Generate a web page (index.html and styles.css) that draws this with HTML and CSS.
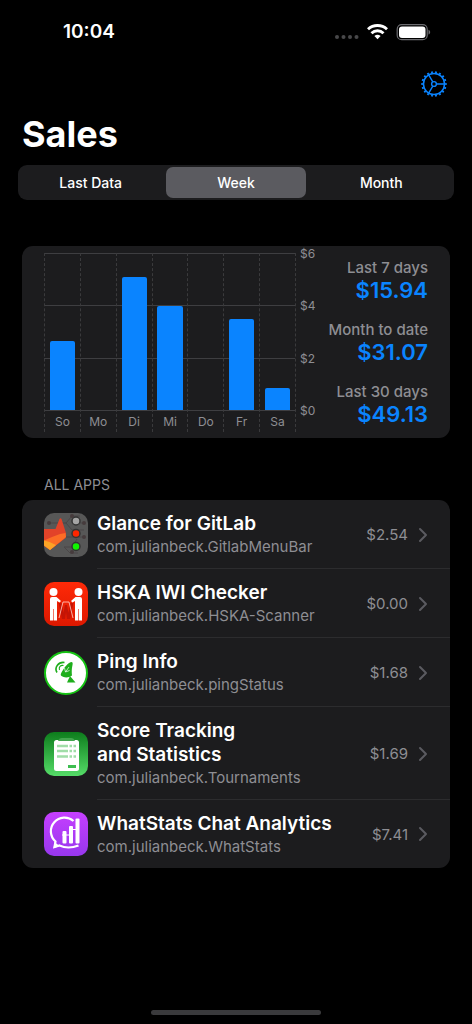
FILE: index.html
```html
<!DOCTYPE html>
<html lang="en">
<head>
<meta charset="utf-8">
<meta name="viewport" content="width=device-width, initial-scale=1">
<title>Sales</title>
<link rel="stylesheet" href="styles.css">
</head>
<body>
<div class="screen">
  <header class="status-bar">
    <time class="clock">10:04</time>
    <svg class="status-icons" width="98" height="20" viewBox="0 0 98 20" aria-hidden="true">
      <g fill="#48484a"><circle cx="3" cy="15" r="2"/><circle cx="9.500" cy="15" r="2"/><circle cx="16" cy="15" r="2"/><circle cx="22.500" cy="15" r="2"/></g>
      <g fill="none" stroke="#fff" stroke-width="2.900"><path d="M34 7.200a14 14 0 0 1 19 0"/><path d="M37.500 11.200a8.700 8.700 0 0 1 12 0"/></g>
      <path d="M40.400 14.100a4.600 4.600 0 0 1 6.200 0L43.500 17.300z" fill="#fff"/>
      <rect x="63.200" y="2.700" width="30" height="15" rx="4.500" fill="none" stroke="#6c6c70" stroke-width="1.200"/>
      <rect x="65" y="4.500" width="26.500" height="11.500" rx="3" fill="#fff"/>
      <path d="M94.500 7.700c2.200.8 2.200 4 0 4.800z" fill="#6c6c70"/>
    </svg>
  </header>

  <nav class="toolbar">
    <button class="settings" type="button" aria-label="Settings">
      <svg width="28" height="28" viewBox="0 0 28 28" fill="none" stroke="#0a84ff">
        <circle cx="14" cy="14" r="10.500" stroke-width="1.500"/>
        <circle cx="14" cy="14" r="11.800" stroke-width="1.900" pathLength="180" stroke-dasharray="4.500 5.500" stroke-dashoffset="2.250"/>
        <circle cx="14" cy="14" r="2.400" stroke-width="1.400"/>
        <path d="M16.400 14h8.100M12.800 11.900 8.700 4.900M12.800 16.100l-4.100 7" stroke-width="1.400"/>
      </svg>
    </button>
  </nav>

  <main>
    <h1 class="title">Sales</h1>

    <fieldset class="segments" aria-label="Period">
      <label class="segment"><input type="radio" name="period"><span>Last Data</span></label>
      <label class="segment"><input type="radio" name="period" checked><span>Week</span></label>
      <label class="segment"><input type="radio" name="period"><span>Month</span></label>
    </fieldset>

    <section class="card overview" aria-label="Sales this week">
      <div class="chart">
        <div class="grid-lines"><i></i><i></i><i></i></div>
        <div class="days">
          <div class="day"><div class="track"><div class="bar" style="height:44%"></div></div><span>So</span></div>
          <div class="day"><div class="track"></div><span>Mo</span></div>
          <div class="day"><div class="track"><div class="bar" style="height:85%"></div></div><span>Di</span></div>
          <div class="day"><div class="track"><div class="bar" style="height:66%"></div></div><span>Mi</span></div>
          <div class="day"><div class="track"></div><span>Do</span></div>
          <div class="day"><div class="track"><div class="bar" style="height:58%"></div></div><span>Fr</span></div>
          <div class="day"><div class="track"><div class="bar" style="height:14%"></div></div><span>Sa</span></div>
        </div>
      </div>
      <div class="scale"><span>$6</span><span>$4</span><span>$2</span><span>$0</span></div>
      <dl class="totals">
        <div><dt>Last 7 days</dt><dd>$15.94</dd></div>
        <div><dt>Month to date</dt><dd>$31.07</dd></div>
        <div><dt>Last 30 days</dt><dd>$49.13</dd></div>
      </dl>
    </section>

    <h2 class="section-label">ALL APPS</h2>
    <ul class="card apps">
      <li><a class="app" href="#gitlab">
        <svg class="app-icon" viewBox="0 0 44 44" aria-hidden="true">
          <defs><clipPath id="tile"><rect width="44" height="44" rx="10"/></clipPath></defs>
          <g clip-path="url(#tile)">
            <rect width="44" height="44" fill="#575757"/>
            <g fill="none" stroke="#4b4748"><path d="M5 10h17l6-7h8M22 10l6 7h12M22 24h18M20 34h8l5-8M20 34l6 6h8M32 10h8"/></g>
            <g fill="#463b3d"><circle cx="5" cy="10" r="2"/><circle cx="28" cy="3" r="2"/><circle cx="40" cy="10" r="2"/><circle cx="40" cy="24" r="2"/><circle cx="28" cy="39" r="2"/></g>
          </g>
          <path d="M0 16h11.500l4-10q1-1.500 2 0l4.500 14-.500 5L6 37 0 33z" fill="#e24329"/>
          <path d="M0 27.500 8 24l8-3 5.500-1 .500 4L6 37 0 32z" fill="#fc6d26"/>
          <path d="M0 27.500 5.500 29l6.500 3-6 5-6-4.500z" fill="#fca326"/>
          <g stroke="#343434" stroke-width="1.500"><circle cx="32" cy="8" r="4" fill="#a5a5a5"/><circle cx="32" cy="20.500" r="4" fill="#ff2600"/><circle cx="32" cy="33.500" r="4" fill="#10f500"/></g>
        </svg>
        <span class="app-text"><strong>Glance for GitLab</strong><small>com.julianbeck.GitlabMenuBar</small></span>
        <span class="amount">$2.54</span>
        <svg class="chevron" viewBox="0 0 10 16"><path d="M2 2l6 6-6 6"/></svg>
      </a></li>
      <li><a class="app" href="#hska">
        <svg class="app-icon" viewBox="0 0 44 44" aria-hidden="true">
          <defs><linearGradient id="red" x2="0" y2="1"><stop stop-color="#ff2a08"/><stop offset="1" stop-color="#dd1800"/></linearGradient></defs>
          <rect width="44" height="44" rx="10" fill="url(#red)"/>
          <path d="M14.500 21h3l2 10 1.500-8h2l1.500 8 2-10h3L26 37h-3l-1-7-1 7h-3z" fill="#c41405"/>
          <g fill="#fff"><circle cx="9.500" cy="10" r="4"/><circle cx="34.500" cy="10" r="4"/>
          <path d="M6 17q0-2 2-2h4.500l4.500 4-1.500 1.500-2.500-1.500v19.500H9.800V27h-.600v11.500H6zM38 17q0-2-2-2h-4.500L27 19l1.500 1.500 2.500-1.500v19.500h3.200V27h.600v11.500H38z"/></g>
          <path d="M15 36l4-16M29 36l-4-16M19 20h6" fill="none" stroke="#ffd2cb" stroke-width=".8"/>
        </svg>
        <span class="app-text"><strong>HSKA IWI Checker</strong><small>com.julianbeck.HSKA-Scanner</small></span>
        <span class="amount">$0.00</span>
        <svg class="chevron" viewBox="0 0 10 16"><path d="M2 2l6 6-6 6"/></svg>
      </a></li>
      <li><a class="app" href="#ping">
        <svg class="app-icon" viewBox="0 0 44 44" aria-hidden="true">
          <circle cx="22" cy="22" r="21" fill="#fff" stroke="#16c314" stroke-width="2"/>
          <g fill="#1eae1c"><path d="M27.500 11c1 0 1.500 1 1 3-.5 2.500-1 5-.5 10.500-3 2.500-8 2.500-10.500.5-1.500-1-.5-3 1.500-6 2.500-4 6-8 8.500-8z"/><path d="M26 25l5.500 6.500h-8.500z"/></g>
          <path d="M21.500 21l3.500-5M21.500 21l-1-4M21.500 21l4-1.500" stroke="#fff" stroke-width=".7"/>
          <g fill="none" stroke="#1eae1c"><path d="M13 21.500c-3-5 1.500-11 7.500-10" stroke-width="1.600"/><path d="M15.500 19c-1-3 1-5 4-4.500" stroke-width="1.100"/></g>
        </svg>
        <span class="app-text"><strong>Ping Info</strong><small>com.julianbeck.pingStatus</small></span>
        <span class="amount">$1.68</span>
        <svg class="chevron" viewBox="0 0 10 16"><path d="M2 2l6 6-6 6"/></svg>
      </a></li>
      <li><a class="app" href="#score">
        <svg class="app-icon" viewBox="0 0 44 44" aria-hidden="true">
          <defs><linearGradient id="green" x2="0" y2="1"><stop stop-color="#0d7c1c"/><stop offset="1" stop-color="#55dc68"/></linearGradient></defs>
          <rect width="44" height="44" rx="10" fill="url(#green)"/>
          <rect x="10" y="8" width="25" height="31" rx="2.500" fill="#fff"/>
          <path d="M14 9q1-3 4-3h9q3 0 4 3z" fill="#43a64f"/>
          <g stroke="#a0dda8" stroke-width="2.500"><path d="M13 14h11M25.500 14h2.500M29.500 14h2.500M13 19h11M25.500 19h2.500M29.500 19h2.500M13 24.500h11M25.500 24.500h2.500M29.500 24.500h2.500"/></g>
          <path d="M24 34.500h8" stroke="#3ebd50" stroke-width="3"/>
        </svg>
        <span class="app-text"><strong>Score Tracking<br>and Statistics</strong><small>com.julianbeck.Tournaments</small></span>
        <span class="amount">$1.69</span>
        <svg class="chevron" viewBox="0 0 10 16"><path d="M2 2l6 6-6 6"/></svg>
      </a></li>
      <li><a class="app" href="#whatstats">
        <svg class="app-icon" viewBox="0 0 44 44" aria-hidden="true">
          <defs><linearGradient id="purple" x2="0" y2="1"><stop stop-color="#c63fff"/><stop offset="1" stop-color="#9737ed"/></linearGradient></defs>
          <rect width="44" height="44" rx="10" fill="url(#purple)"/>
          <path d="M29.500 9A13.500 13.500 0 0 0 11.500 29.500L10.500 35 15.500 33.500Q24 37.500 34.500 33.500" fill="none" stroke="#fff" stroke-width="2.200"/>
          <path d="M10.500 30l5 4-6 2.500z" fill="#fff"/>
          <g fill="#fff"><rect x="18.500" y="19" width="4" height="12.500" rx="1"/><rect x="25" y="14" width="4" height="17.500" rx="1"/><rect x="31.500" y="6.500" width="4" height="25" rx="1"/></g>
          <path d="M18 23h7M25 17.500h7" stroke="#fff" stroke-width="1.200"/>
        </svg>
        <span class="app-text"><strong>WhatStats Chat Analytics</strong><small>com.julianbeck.WhatStats</small></span>
        <span class="amount">$7.41</span>
        <svg class="chevron" viewBox="0 0 10 16"><path d="M2 2l6 6-6 6"/></svg>
      </a></li>
    </ul>
  </main>
  <footer class="home"><div class="home-indicator"></div></footer>
</div>
</body>
</html>
```
FILE: styles.css
```css
* { box-sizing: border-box; }

body {
  margin: 0;
  background: #000;
  color: #fff;
  font-family: Inter, "Liberation Sans", sans-serif;
}

.screen {
  min-height: 100vh;
  display: flex;
  flex-direction: column;
}

.status-bar {
  height: 64px;
  padding: 0 40px 0 63px;
  display: flex;
  align-items: center;
  justify-content: space-between;
}

.clock { font-size: 19px; font-weight: 600; line-height: 24px; }

.toolbar {
  height: 40px;
  padding: 0 24px;
  display: flex;
  align-items: center;
  justify-content: flex-end;
}

.settings {
  display: flex;
  padding: 0;
  border: 0;
  background: none;
}

.title {
  margin: 8px 22px;
  font-size: 36px;
  font-weight: 700;
  line-height: 45px;
}

.segments {
  display: flex;
  margin: 0 18px;
  padding: 2px 0;
  border: 0;
  border-radius: 9px;
  background: #1c1c1e;
}

.segment { flex: 1; cursor: pointer; }

.segment input {
  appearance: none;
  position: absolute;
  margin: 0;
}

.segment span {
  display: block;
  margin: 0 3px;
  border-radius: 7px;
  font-size: 14px;
  font-weight: 500;
  line-height: 31px;
  text-align: center;
}

.segment input:checked + span { background: #5b5b60; }

.card {
  margin: 0 22px;
  border-radius: 11px;
  background: #1c1c1e;
}

.overview {
  display: flex;
  margin-top: 46px;
  padding: 7px 22px 6px;
  color: #8e8e93;
}

.chart {
  flex: 1;
  display: grid;
  border-right: 1px dashed #3a3a3c;
}

.grid-lines, .days { grid-area: 1 / 1; }

.grid-lines {
  height: 158px;
  display: flex;
  flex-direction: column;
  border-bottom: 1px solid #3e3e41;
}

.grid-lines i { flex: 1; border-top: 1px solid #3e3e41; }

.days { display: flex; }

.day {
  flex: 1;
  border-left: 1px dashed #3a3a3c;
  font-size: 12px;
  line-height: 20px;
  text-align: center;
}

.day span { display: block; padding-top: 2px; }

.track {
  height: 157px;
  display: flex;
  align-items: flex-end;
  justify-content: center;
}

.bar {
  width: 72%;
  border-radius: 2px 2px 0 0;
  background: #0a84ff;
}

.scale {
  height: 172px;
  margin: -7px 0 0 4px;
  display: flex;
  flex-direction: column;
  justify-content: space-between;
  font-size: 12px;
  line-height: 15px;
}

.totals {
  margin: 5px 0 6px 13px;
  display: flex;
  flex-direction: column;
  justify-content: space-between;
  text-align: right;
  white-space: nowrap;
}

.totals dt {
  font-size: 15px;
  font-weight: 500;
  line-height: 20px;
}

.totals dd {
  margin: 0;
  color: #0a84ff;
  font-size: 22px;
  font-weight: 600;
  line-height: 24px;
}

.section-label {
  margin: 38px 44px 6px;
  color: #8e8e93;
  font-size: 14px;
  font-weight: 400;
  line-height: 18px;
}

.apps {
  padding: 0;
  list-style: none;
  overflow: hidden;
}

.app {
  display: grid;
  grid-template-columns: 44px 1fr auto 10px;
  align-items: center;
  padding: 0 22px;
  column-gap: 9px;
  color: inherit;
  text-decoration: none;
  background: linear-gradient(#2c2c2e, #2c2c2e) 75px 100% / 100% 1px no-repeat;
}

.apps li:last-child .app { background: none; }

.app-icon { width: 44px; height: 44px; }

.app-text { padding: 12px 0 11px; }

.apps li:last-child .app-text { padding-bottom: 10px; }

.app-text strong {
  display: block;
  font-size: 19px;
  font-weight: 600;
  line-height: 24px;
}

.app-text small {
  display: block;
  color: #8e8e93;
  font-size: 15px;
  line-height: 22px;
  white-space: nowrap;
}

.amount {
  margin-right: 1px;
  color: #8e8e93;
  font-size: 15px;
}

.chevron {
  width: 10px;
  height: 16px;
  fill: none;
  stroke: #5b5b60;
  stroke-width: 2;
  stroke-linecap: round;
  stroke-linejoin: round;
}

.home {
  margin-top: auto;
  padding-bottom: 9px;
  display: flex;
  justify-content: center;
}

.home-indicator {
  width: 36%;
  height: 5px;
  border-radius: 3px;
  background: #3a3a3c;
}
```
